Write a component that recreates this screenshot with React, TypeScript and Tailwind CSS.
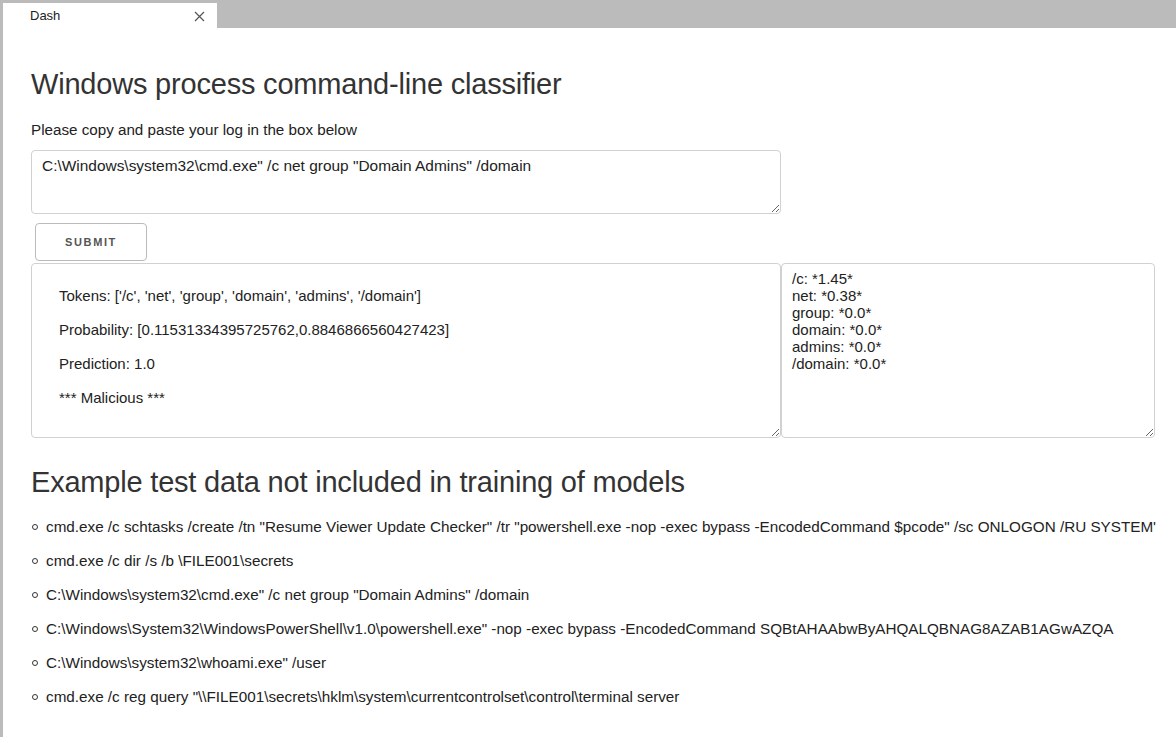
import React from "react";

const examples = [
  `cmd.exe /c schtasks /create /tn "Resume Viewer Update Checker" /tr "powershell.exe -nop -exec bypass -EncodedCommand $pcode" /sc ONLOGON /RU SYSTEM'`,
  `cmd.exe /c dir /s /b \\FILE001\\secrets`,
  `C:\\Windows\\system32\\cmd.exe" /c net group "Domain Admins" /domain`,
  `C:\\Windows\\System32\\WindowsPowerShell\\v1.0\\powershell.exe" -nop -exec bypass -EncodedCommand SQBtAHAAbwByAHQALQBNAG8AZAB1AGwAZQA`,
  `C:\\Windows\\system32\\whoami.exe" /user`,
  `cmd.exe /c reg query "\\\\FILE001\\secrets\\hklm\\system\\currentcontrolset\\control\\terminal server`,
];

const resultText =
  "Tokens: ['/c', 'net', 'group', 'domain', 'admins', '/domain']\n\nProbability: [0.11531334395725762,0.8846866560427423]\n\nPrediction: 1.0\n\n*** Malicious ***";

const weightsText =
  "/c: *1.45*\nnet: *0.38*\ngroup: *0.0*\ndomain: *0.0*\nadmins: *0.0*\n/domain: *0.0*";

export default function App() {
  return (
    <div
      className="w-[1176px] h-[737px] overflow-hidden flex bg-[#bbbbbb] text-[#222] text-[15px]"
      style={{ fontFamily: '"Liberation Sans", Arial, Helvetica, sans-serif' }}
    >
      <div className="w-[3px] shrink-0" />
      <div className="flex-1 flex flex-col min-w-0">
        <div className="h-[28px] flex items-end shrink-0">
          <div className="h-[25px] w-[214px] bg-white flex items-center pl-[27px] pr-[12px] text-[13px] text-[#222]">
            <span className="flex-1 pt-[1px]">Dash</span>
            <svg width="11" height="11" viewBox="0 0 11 11" className="mt-[1px]">
              <path d="M1 1 L10 10 M10 1 L1 10" stroke="#555" strokeWidth="1.2" fill="none" />
            </svg>
          </div>
        </div>
        <div className="flex-1 bg-white pl-[28px] pt-[37px]">
          <h1 className="text-[29px] leading-[38px] text-[#333] font-normal tracking-[-0.2px]">
            Windows process command-line classifier
          </h1>
          <p className="mt-[18px] leading-[17px] text-[15.2px]">Please copy and paste your log in the box below</p>
          <textarea
            readOnly
            value={`C:\\Windows\\system32\\cmd.exe" /c net group "Domain Admins" /domain`}
            className="mt-[12px] block w-[750px] h-[64px] border border-[#d1d1d1] rounded-[4px] px-[10px] py-[6px] leading-[17px] text-[15.45px] text-[#222] outline-none"
          />
          <button className="mt-[9px] ml-[4px] h-[38px] w-[112px] border border-[#bbb] rounded-[4px] bg-transparent text-[11px] font-semibold tracking-[1.6px] text-[#555] uppercase">
            Submit
          </button>
          <div className="flex mt-[2px]">
            <textarea
              readOnly
              value={resultText}
              className="block w-[750px] h-[175px] border border-[#d1d1d1] rounded-[4px] pl-[27px] pr-[10px] pt-[23px] leading-[17px] text-[15px] text-[#222] outline-none"
            />
            <textarea
              readOnly
              value={weightsText}
              className="block w-[374px] h-[175px] border border-[#d1d1d1] rounded-[4px] px-[10px] pt-[6px] leading-[17px] text-[15px] text-[#222] outline-none"
            />
          </div>
          <h2 className="mt-[25px] text-[29px] leading-[38px] text-[#333] font-normal tracking-[-0.2px]">
            Example test data not included in training of models
          </h2>
          <ul className="mt-[17px] flex flex-col gap-[17px] text-[15.25px]">
            {examples.map((e, i) => (
              <li key={i} className="flex items-center leading-[17px] whitespace-nowrap">
                <span className="w-[6px] h-[6px] rounded-full border border-[#333] ml-[1px] mr-[8px] shrink-0" />
                <span>{e}</span>
              </li>
            ))}
          </ul>
        </div>
      </div>
    </div>
  );
}
